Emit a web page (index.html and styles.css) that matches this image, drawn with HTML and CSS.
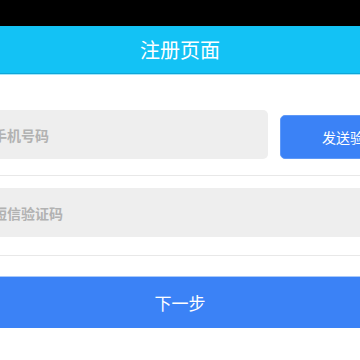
FILE: index.html
```html
<!DOCTYPE html>
<html lang="zh">
<head>
<meta charset="utf-8">
<title>注册页面</title>
<link rel="stylesheet" href="styles.css">
</head>
<body>
<div class="page">
  <div class="status"></div>
  <div class="header">注册页面</div>
  <div class="form">
    <div class="row row-phone">
      <div class="field field-phone">手机号码</div>
      <div class="send-btn">发送验证码</div>
    </div>
    <div class="row row-code">
      <div class="field field-code">短信验证码</div>
    </div>
  </div>
  <div class="next-btn">下一步</div>
</div>
</body>
</html>
```
FILE: styles.css
```css
html, body {
  margin: 0;
  padding: 0;
  background: #ffffff;
}
body {
  font-family: "Noto Sans CJK SC", "Noto Sans", sans-serif;
  overflow: hidden;
}
.page {
  width: 360px;
  height: 360px;
  overflow: hidden;
}
.status {
  height: 26px;
  background: #000000;
}
.header {
  height: 47px;
  background: #13c2f5;
  color: #ffffff;
  font-size: 20px;
  display: flex;
  align-items: center;
  justify-content: center;
  border-bottom: 1px solid #0ea6d8;
  box-shadow: 0 1px 0 #a6e6f9;
}
.form {
  margin-left: -40px;
  width: 460px;
}
.row {
  display: flex;
  align-items: flex-end;
  gap: 12px;
  border-bottom: 1px solid #e8e8e8;
}
.row-phone {
  padding-top: 36px;
  padding-bottom: 16px;
}
.row-code {
  padding-top: 12px;
  padding-bottom: 18px;
}
.field {
  box-sizing: border-box;
  height: 49px;
  background: #eeeeee;
  border-radius: 5px;
  display: flex;
  align-items: center;
  padding-left: 33px;
  font-size: 14px;
  font-weight: 700;
  color: #b2b2b2;
}
.field-phone {
  width: 308px;
}
.field-code {
  width: 460px;
}
.send-btn {
  box-sizing: border-box;
  width: 140px;
  height: 44px;
  background: #3b82f6;
  border: 1px solid #5f99f7;
  border-radius: 5px;
  color: #ffffff;
  font-size: 14px;
  display: flex;
  align-items: center;
  padding-left: 41px;
}
.next-btn {
  margin-top: 20px;
  height: 51px;
  background: #3b82f6;
  border-top: 1px solid #a9c9fa;
  color: #ffffff;
  font-size: 17px;
  display: flex;
  align-items: center;
  justify-content: center;
}
```
